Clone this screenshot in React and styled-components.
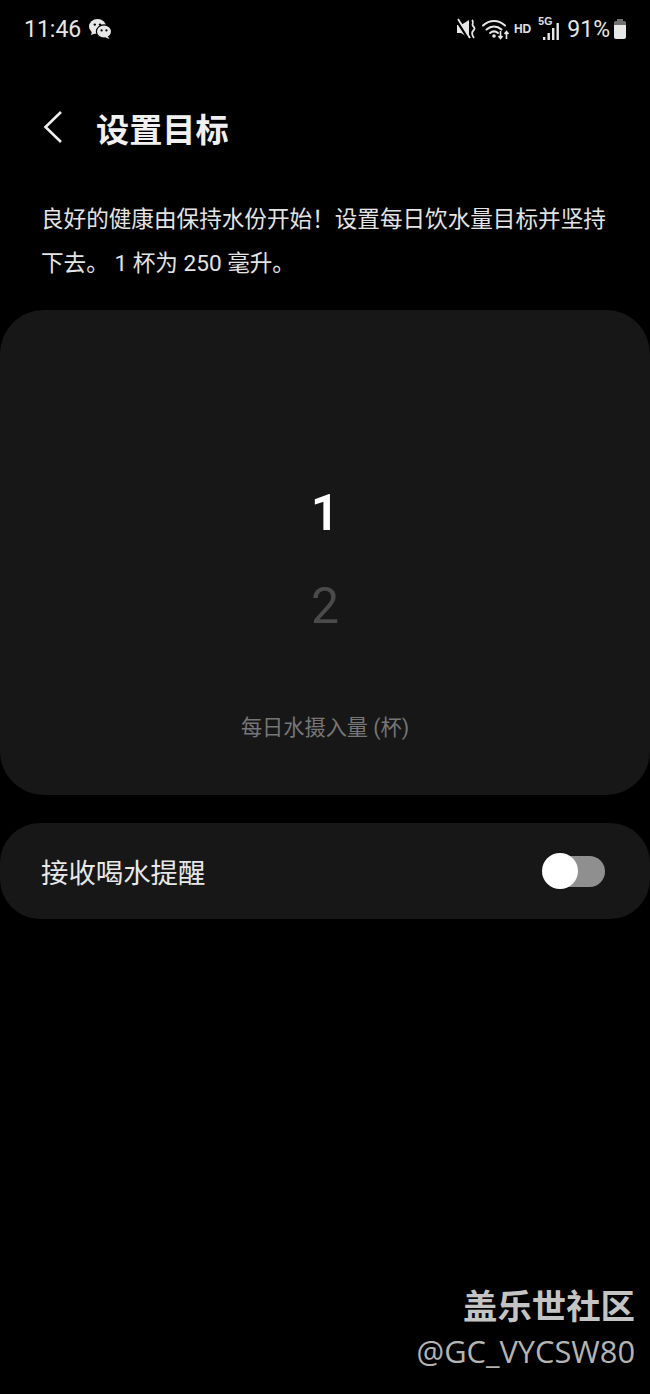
import React from 'react';
import styled, { createGlobalStyle } from 'styled-components';

const GlobalStyle = createGlobalStyle`
  html, body {
    margin: 0;
    padding: 0;
    background: #000000;
  }
`

const Page = styled.div`
  width: 650px;
  height: 1394px;
  background: #000000;
  color: #f2f2f2;
  font-family: "Roboto", "Noto Sans CJK SC", sans-serif;
  display: flex;
  flex-direction: column;
  overflow: hidden;
`

const StatusBar = styled.div`
  height: 60px;
  padding: 0 23px 2px 24px;
  box-sizing: border-box;
  display: flex;
  align-items: center;
  justify-content: space-between;
  color: #e6e6e6;
`

const StatusGroup = styled.div`
  display: flex;
  align-items: center;
`

const Time = styled.span`
  font-size: 23px;
  margin-right: 7px;
`

const Percent = styled.span`
  font-size: 23px;
  margin: 0 3px 0 6px;
`

const Header = styled.div`
  height: 60px;
  margin-top: 37px;
  padding-left: 42px;
  display: flex;
  align-items: center;
`

const BackButton = styled.svg`
  width: 22px;
  height: 36px;
  margin-right: 32px;
`

const Title = styled.h1`
  margin: 0;
  font-size: 33.2px;
  font-weight: 700;
  color: #f0f0f0;
`

const Intro = styled.p`
  margin: 41px 40px 24px 41px;
  font-size: 22.6px;
  line-height: 44px;
  color: #e4e4e4;
`

const PickerCard = styled.div`
  height: 485px;
  background: #171717;
  border-radius: 44px;
  display: flex;
  flex-direction: column;
  align-items: center;
  padding-top: 173px;
  box-sizing: border-box;
`

const PickerNumber = styled.div`
  height: 60px;
  line-height: 60px;
  font-size: 50px;
  font-weight: ${p => (p.$active ? 600 : 400)};
  color: ${p => (p.$active ? '#ffffff' : '#4a4a4a')};
  margin-bottom: ${p => (p.$active ? '33px' : '0')};
`

const PickerLabel = styled.div`
  margin-top: 77px;
  font-size: 21.2px;
  line-height: 30px;
  color: #767676;
`

const ReminderRow = styled.div`
  height: 96px;
  margin-top: 28px;
  padding: 0 45px 0 41px;
  background: #171717;
  border-radius: 40px;
  display: flex;
  align-items: center;
  justify-content: space-between;
`

const ReminderLabel = styled.span`
  font-size: 27.4px;
  color: #e8e8e8;
`

const Toggle = styled.div`
  position: relative;
  width: 60px;
  height: 31px;
  border-radius: 16px;
  background: #8f8f8f;
`

const Thumb = styled.div`
  position: absolute;
  left: -3px;
  top: -2.5px;
  width: 36px;
  height: 36px;
  border-radius: 50%;
  background: #ffffff;
`

const Watermark = styled.div`
  margin-top: auto;
  margin-bottom: 20px;
  padding-right: 15px;
  align-self: flex-end;
  text-align: right;
  color: #c4c4c4;
`

const WatermarkName = styled.div`
  font-size: 34.4px;
  font-weight: 700;
  line-height: 44px;
`

const WatermarkUser = styled.div`
  font-size: 30.8px;
  line-height: 45px;
  font-family: "Open Sans", sans-serif;
  color: #b4b4b4;
`

const WeChatIcon = () => (
  <svg width="24" height="22" viewBox="0 0 24 22">
    <ellipse cx="9.5" cy="8.5" rx="8.5" ry="7.5" fill="#e8e8e8" />
    <path d="M4 13l-1 4 5-2z" fill="#e8e8e8" />
    <circle cx="6.8" cy="6.6" r="1.2" fill="#000" />
    <circle cx="12" cy="6.6" r="1.2" fill="#000" />
    <ellipse cx="16" cy="13.5" rx="7.6" ry="6.6" fill="#e8e8e8" stroke="#000" strokeWidth="1.2" />
    <path d="M19.5 18l2 3-4-1.6z" fill="#e8e8e8" />
    <circle cx="13.6" cy="12.4" r="1.1" fill="#000" />
    <circle cx="18.4" cy="12.4" r="1.1" fill="#000" />
  </svg>
)

const MuteIcon = () => (
  <svg width="20" height="22" viewBox="0 0 20 22" style={{ marginRight: 5 }}>
    <path d="M0 7h4l8-5v18l-8-5H0z" fill="#e8e8e8" />
    <path d="M0 3l11 17" stroke="#000" strokeWidth="2.600" />
    <path d="M1 1l12 19" stroke="#e8e8e8" strokeWidth="1.800" />
    <path d="M15 2c3 3-1 4 1 6s2 3 0 5-1 4 1 7" fill="none" stroke="#e8e8e8" strokeWidth="1.800" />
  </svg>
)

const WifiIcon = () => (
  <svg width="28" height="22" viewBox="0 0 28 22" style={{ marginRight: 4 }}>
    <g fill="none" stroke="#e8e8e8" strokeWidth="2" strokeLinecap="round">
      <path d="M1 7.5c6.5-6 15.5-6 22 0" />
      <path d="M4.5 11.5c4.5-4 10.500-4 15 0" />
      <path d="M8 15c2.500-2 5.500-2 8 0" />
    </g>
    <circle cx="12" cy="18" r="1.8" fill="#e8e8e8" />
    <path d="M18.500 13v7M16.500 18l2 2.500 2-2.500" fill="none" stroke="#e8e8e8" strokeWidth="1.600" />
    <path d="M24.500 21v-7M22.500 16l2-2.500 2 2.500" fill="none" stroke="#e8e8e8" strokeWidth="1.600" />
  </svg>
)

const HdText = styled.span`
  font-size: 12px;
  font-weight: 700;
  font-family: "Liberation Sans", sans-serif;
  margin-right: 6px;
  color: #e0e0e0;
`

const SignalWrap = styled.div`
  position: relative;
  width: 24px;
  height: 26px;
`

const FiveG = styled.span`
  position: absolute;
  left: 1px;
  top: -1px;
  font-size: 10.5px;
  font-weight: 700;
  font-family: "Liberation Sans", sans-serif;
  color: #e0e0e0;
`

const SignalIcon = () => (
  <SignalWrap>
    <FiveG>5G</FiveG>
    <svg width="24" height="26" viewBox="0 0 24 26">
      <rect x="6" y="21" width="2.400" height="3" fill="#e8e8e8" />
      <rect x="10.500" y="17" width="2.400" height="7" fill="#e8e8e8" />
      <rect x="15" y="12" width="2.400" height="12" fill="#e8e8e8" />
      <rect x="19.500" y="7" width="2.400" height="17" fill="#e8e8e8" />
    </svg>
  </SignalWrap>
)

const BatteryIcon = () => (
  <svg width="14" height="22" viewBox="0 0 14 22">
    <rect x="4" y="1" width="6" height="3" fill="#707070" />
    <rect x="1" y="3" width="12" height="5" rx="1.500" fill="#707070" />
    <path d="M1 7h12v12a2 2 0 0 1-2 2H3a2 2 0 0 1-2-2z" fill="#e8e8e8" />
  </svg>
)

const App = () => {
  return (
    <Page>
      <GlobalStyle />
      <StatusBar>
        <StatusGroup>
          <Time>11:46</Time>
          <WeChatIcon />
        </StatusGroup>
        <StatusGroup>
          <MuteIcon />
          <WifiIcon />
          <HdText>HD</HdText>
          <SignalIcon />
          <Percent>91%</Percent>
          <BatteryIcon />
        </StatusGroup>
      </StatusBar>
      <Header>
        <BackButton viewBox="0 0 22 36">
          <path d="M19 3L3.500 18 19 33" fill="none" stroke="#f0f0f0" strokeWidth="2.600" />
        </BackButton>
        <Title>设置目标</Title>
      </Header>
      <Intro>良好的健康由保持水份开始！设置每日饮水量目标并坚持下去。 1 杯为 250 毫升。</Intro>
      <PickerCard>
        <PickerNumber $active>1</PickerNumber>
        <PickerNumber>2</PickerNumber>
        <PickerLabel>每日水摄入量 (杯)</PickerLabel>
      </PickerCard>
      <ReminderRow>
        <ReminderLabel>接收喝水提醒</ReminderLabel>
        <Toggle>
          <Thumb />
        </Toggle>
      </ReminderRow>
      <Watermark>
        <WatermarkName>盖乐世社区</WatermarkName>
        <WatermarkUser>@GC_VYCSW80</WatermarkUser>
      </Watermark>
    </Page>
  )
}

export default App
